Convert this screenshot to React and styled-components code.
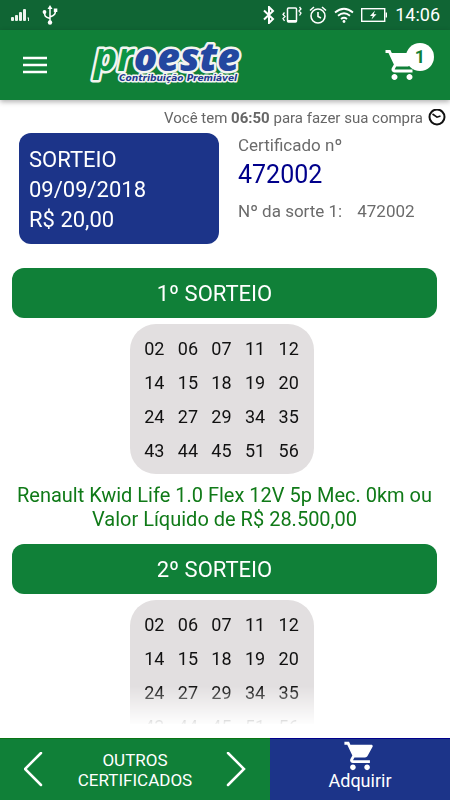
import React from "react";
import styled, { createGlobalStyle } from "styled-components";

const GlobalStyle = createGlobalStyle`
  *, *::before, *::after { box-sizing: border-box; }
  body { margin: 0; background: #fff; font-family: Roboto, sans-serif; }
  button { font: inherit; color: inherit; border: 0; padding: 0; background: none; cursor: pointer; }
  h1, h2, p { margin: 0; font-weight: 400; }
  svg { display: block; flex: none; }
`;

const Screen = styled.div`
  display: flex;
  flex-direction: column;
  height: 100vh;
  overflow: hidden;
`;

const StatusBar = styled.div`
  flex: none;
  display: flex;
  align-items: center;
  justify-content: space-between;
  height: 30px;
  padding: 0 10px 0 11px;
  background: #106534;
  color: #fff;
`;

const StatusGroup = styled.div`
  display: flex;
  align-items: center;
  gap: ${(p) => p.$gap}px;
`;

const Clock = styled.time`
  margin-left: 1px;
  font-size: 18px;
  line-height: 30px;
`;

const Header = styled.header`
  flex: none;
  display: flex;
  align-items: center;
  height: 70px;
  padding: 0 16px 0 22px;
  background: #108038;
  color: #fff;
  box-shadow: 0 2px 5px rgba(0, 0, 0, 0.3);
  z-index: 1;
`;

const IconButton = styled.button`
  display: flex;
  align-items: center;
  justify-content: center;
`;

const LogoLink = styled.a`
  margin-left: 38px;
`;

const CartButton = styled(IconButton)`
  position: relative;
  margin-left: auto;
  width: 50px;
  height: 48px;
  justify-content: flex-start;
`;

const Badge = styled.span`
  position: absolute;
  top: 2px;
  right: 0;
  width: 28px;
  height: 28px;
  border-radius: 50%;
  background: #fff;
  color: #108038;
  font-size: 18px;
  font-weight: 700;
  line-height: 28px;
  text-align: center;
`;

const Content = styled.main`
  flex: 1;
  min-height: 0;
  overflow: hidden;
  margin-bottom: 14px;
  padding-top: 8px;
  mask-image: linear-gradient(to top, rgba(0, 0, 0, 0.05), #000 38px);
`;

const Timer = styled.p`
  display: flex;
  align-items: center;
  justify-content: flex-end;
  gap: 5px;
  height: 20px;
  padding-right: 4px;
  color: #666;
  font-size: 15px;
`;

const Summary = styled.section`
  display: flex;
  gap: 19px;
  margin: 5px 19px 24px;
`;

const DrawCard = styled.div`
  width: 200px;
  padding: 12px 10px 9px;
  border-radius: 12px;
  background: #1c3489;
  color: #fff;
  font-size: 22px;
  line-height: 30px;
`;

const Certificate = styled.div`
  color: #6b6b6b;
  font-size: 17px;
  line-height: 24px;
`;

const CertificateNumber = styled.p`
  margin: 3px 0 9px;
  color: #00008b;
  font-size: 25px;
  line-height: 30px;
`;

const LuckyNumber = styled.p`
  display: flex;
  gap: 15px;
`;

const Draw = styled.section`
  margin: 0 13px 13px 12px;
`;

const DrawTitle = styled.h2`
  padding: 1px 20px 0 0;
  border-radius: 12px;
  background: #108038;
  color: #fff;
  font-size: 22px;
  line-height: 49px;
  text-align: center;
`;

const PanelRow = styled.div`
  display: flex;
  justify-content: center;
  padding: 6px 6px 9px 0;
`;

const NumberPanel = styled.div`
  width: 184px;
  padding: 7px 8px;
  border-radius: 26px;
  background: #e2dfe0;
`;

const NumberTable = styled.table`
  width: 100%;
  table-layout: fixed;
  border-collapse: collapse;
  color: #111;
  font-size: 18px;
  text-align: center;

  td {
    height: 34px;
    padding: 0;
  }
`;

const Prize = styled.p`
  color: #107a18;
  font-size: 20px;
  line-height: 24px;
  text-align: center;
`;

const Footer = styled.footer`
  flex: none;
  display: grid;
  grid-template-columns: 3fr 2fr;
  height: 62px;
  color: #fff;
  font-size: 18px;
`;

const Pager = styled.nav`
  display: flex;
  align-items: center;
  justify-content: space-between;
  padding: 0 24px;
  border-top: 1px solid #0a7414;
  background: #108038;
  font-size: 17px;
  line-height: 20px;
  text-align: center;
`;

const PagerLabel = styled.span`
  width: 130px;
`;

const BuyButton = styled.button`
  && {
    display: flex;
    flex-direction: column;
    align-items: center;
    justify-content: flex-start;
    border-top: 1px solid #00008b;
    background: #1c3489;
    line-height: 16px;
  }
`;

const CartIcon = ({ size }) => (
  <svg width={size} height={size} viewBox="0 0 24 24" fill="currentColor" aria-hidden="true">
    <path d="M7 18c-1.100 0-1.990.9-1.990 2S5.900 22 7 22s2-.9 2-2-.9-2-2-2zM1 2v2h2l3.600 7.590-1.350 2.450c-.16.28-.25.61-.25.96 0 1.100.9 2 2 2h12v-2H7.420c-.14 0-.25-.11-.25-.25l.03-.12.9-1.630h7.450c.75 0 1.410-.41 1.750-1.030l3.580-6.490c.08-.14.12-.31.12-.48 0-.55-.45-1-1-1H5.210l-.94-2H1zm16 16c-1.100 0-1.990.9-1.990 2s.89 2 1.990 2 2-.9 2-2-.9-2-2-2z" />
  </svg>
);

const Logo = () => (
  <svg width="160" height="56" viewBox="0 0 160 56" role="img" aria-label="proeste Contribuição Premiável">
    <g stroke="#f4f4f0" strokeLinejoin="round" paintOrder="stroke" fontStyle="italic">
      <text x="8" y="34" strokeWidth="5" fontFamily="'Open Sans', sans-serif" fontSize="39">
        <tspan fontWeight="700" fill="#0b9444">pr</tspan>
        <tspan fontWeight="800" fill="#2347a0">oeste</tspan>
      </text>
      <text x="33" y="44" strokeWidth="3" fontFamily="'DejaVu Sans', sans-serif" fontSize="9" fontWeight="700" fill="#22378f">
        Contribuição Premiável
      </text>
    </g>
  </svg>
);

const SignalIcon = () => (
  <svg width="20" height="14" viewBox="0 0 20 14" fill="#eef5ee" aria-hidden="true">
    <rect x="0" y="9" width="3" height="4" rx="1" />
    <rect x="4" y="7" width="3" height="6" rx="1" />
    <rect x="8" y="4" width="3" height="9" rx="1" />
    <rect x="12" y="1" width="3" height="12" rx="1" />
    <path d="M16.500 9.500h1.500V13h-1V10.500h-.5z" />
  </svg>
);

const UsbIcon = () => (
  <svg width="16" height="20" viewBox="0 0 16 20" fill="none" stroke="#fff" strokeWidth="1.500" aria-hidden="true">
    <path d="M8 3v14M8 13.500C3 12 2.500 11 2.500 7M8 12c5-2 5.500-3 5.500-7" />
    <path d="M8 0l2.500 4h-5z" fill="#fff" stroke="none" />
    <circle cx="8" cy="17.500" r="2.200" fill="#fff" stroke="none" />
    <circle cx="2.500" cy="7" r="1.900" fill="#fff" stroke="none" />
    <rect x="11.800" y="3.500" width="3.500" height="3.500" fill="#fff" stroke="none" />
  </svg>
);

const BluetoothIcon = () => (
  <svg width="12" height="18" viewBox="0 0 12 18" fill="none" stroke="#fff" strokeWidth="2" aria-hidden="true">
    <path d="M1 4.500l9 8.500L6 17V1l4 4L1 13.500" />
  </svg>
);

const VibrateIcon = () => (
  <svg width="20" height="18" viewBox="0 0 20 18" fill="none" stroke="#fff" aria-hidden="true">
    <rect x="5.500" y="2" width="9" height="14" rx="1" strokeWidth="1.500" />
    <path d="M5 15h10" strokeWidth="2" />
    <path d="M2.500 6.500l-1.500 2 2 2-2 2 1.500 2.500M17.500 1l1.500 2-2 2 2 2-1.500 2.500" strokeWidth="1.300" />
  </svg>
);

const AlarmIcon = () => (
  <svg width="18" height="18" viewBox="0 0 18 18" fill="none" stroke="#fff" strokeWidth="1.600" aria-hidden="true">
    <circle cx="9" cy="10" r="7" />
    <path d="M9 6v4.500l3 1.500M1 4.500L5 1M17 4.500L13 1" />
  </svg>
);

const WifiIcon = () => (
  <svg width="20" height="16" viewBox="0 0 20 16" fill="none" stroke="#fff" strokeWidth="1.800" aria-hidden="true">
    <path d="M1 5.500Q10-2 19 5.500M4 8.800q6-5 12 0M7 12q3-2.500 6 0" />
    <circle cx="10" cy="14.500" r="1.400" fill="#fff" stroke="none" />
  </svg>
);

const BatteryIcon = () => (
  <svg width="26" height="14" viewBox="0 0 26 14" fill="none" stroke="#fff" aria-hidden="true">
    <rect x=".7" y=".7" width="23" height="12.600" strokeWidth="1.400" />
    <path d="M25.300 4.500v5" strokeWidth="1.400" />
    <path d="M14 2.500L9 8h2.800L10.500 11.500 15.500 6.200h-2.800z" fill="#fff" stroke="none" />
  </svg>
);

const MenuIcon = () => (
  <svg width="26" height="18" viewBox="0 0 26 18" fill="none" stroke="#fff" strokeWidth="2.500" aria-hidden="true">
    <path d="M1 2h24M1 9h24M1 16h24" />
  </svg>
);

const TimerIcon = () => (
  <svg width="18" height="18" viewBox="0 0 18 18" fill="none" stroke="#111" strokeWidth="2" aria-hidden="true">
    <circle cx="9" cy="8" r="7.500" />
    <path d="M4.500 5L9 8.200l3.500-1.200" strokeWidth="1.600" />
  </svg>
);

const Chevron = ({ back }) => (
  <svg width="20" height="36" viewBox="0 0 20 36" fill="none" stroke="#fff" strokeWidth="2.500" strokeLinecap="round" aria-hidden="true">
    <path d={back ? "M17 1L1 17l16 16" : "M2 1l16 16L2 33"} />
  </svg>
);

const rows = [
  ["02", "06", "07", "11", "12"],
  ["14", "15", "18", "19", "20"],
  ["24", "27", "29", "34", "35"],
  ["43", "44", "45", "51", "56"],
];

const draws = [
  { title: "1º SORTEIO", prize: "Renault Kwid Life 1.0 Flex 12V 5p Mec. 0km ou Valor Líquido de R$ 28.500,00" },
  { title: "2º SORTEIO" },
];

export default function App() {
  return (
    <Screen>
      <GlobalStyle />
      <StatusBar>
        <StatusGroup $gap={11}>
          <SignalIcon />
          <UsbIcon />
        </StatusGroup>
        <StatusGroup $gap={7}>
          <BluetoothIcon />
          <VibrateIcon />
          <AlarmIcon />
          <WifiIcon />
          <BatteryIcon />
          <Clock>14:06</Clock>
        </StatusGroup>
      </StatusBar>
      <Header>
        <IconButton type="button" aria-label="Menu">
          <MenuIcon />
        </IconButton>
        <LogoLink href="#">
          <Logo />
        </LogoLink>
        <CartButton type="button" aria-label="Carrinho, 1 item">
          <CartIcon size={36} />
          <Badge>1</Badge>
        </CartButton>
      </Header>
      <Content>
        <Timer>
          <span>
            Você tem <b>06:50</b> para fazer sua compra
          </span>
          <TimerIcon />
        </Timer>
        <Summary>
          <DrawCard>
            <p>SORTEIO</p>
            <p>09/09/2018</p>
            <p>R$ 20,00</p>
          </DrawCard>
          <Certificate>
            <p>Certificado nº</p>
            <CertificateNumber>472002</CertificateNumber>
            <LuckyNumber>
              <span>Nº da sorte 1:</span>
              <span>472002</span>
            </LuckyNumber>
          </Certificate>
        </Summary>
        {draws.map((draw) => (
          <Draw key={draw.title}>
            <DrawTitle>{draw.title}</DrawTitle>
            <PanelRow>
              <NumberPanel>
                <NumberTable>
                  <tbody>
                    {rows.map((row) => (
                      <tr key={row[0]}>
                        {row.map((n) => (
                          <td key={n}>{n}</td>
                        ))}
                      </tr>
                    ))}
                  </tbody>
                </NumberTable>
              </NumberPanel>
            </PanelRow>
            {draw.prize && <Prize>{draw.prize}</Prize>}
          </Draw>
        ))}
      </Content>
      <Footer>
        <Pager aria-label="Certificados">
          <IconButton type="button" aria-label="Anterior">
            <Chevron back />
          </IconButton>
          <PagerLabel>OUTROS CERTIFICADOS</PagerLabel>
          <IconButton type="button" aria-label="Próximo">
            <Chevron />
          </IconButton>
        </Pager>
        <BuyButton type="button">
          <CartIcon size={34} />
          Adquirir
        </BuyButton>
      </Footer>
    </Screen>
  );
}
